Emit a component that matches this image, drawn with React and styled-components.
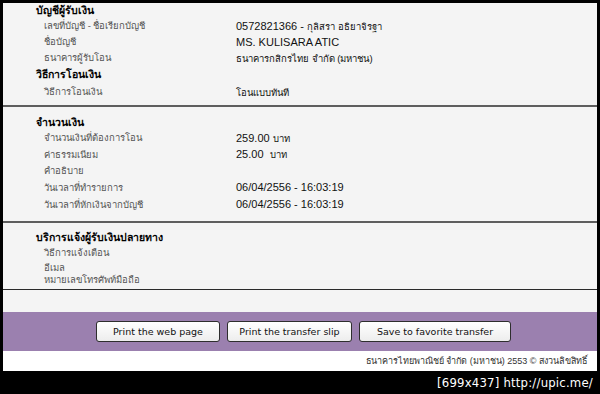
import React from 'react';
import styled, { createGlobalStyle } from 'styled-components';

const GlobalStyle = createGlobalStyle`
  html, body {
    margin: 0;
    padding: 0;
    background: #000;
  }
  body {
    font-family: Tahoma, "Liberation Sans", "Noto Sans", sans-serif;
  }
`;

const Frame = styled.div`
  width: 600px;
  height: 394px;
  background: #000;
  padding: 3px 3px 0 3px;
  box-sizing: border-box;
  display: flex;
  flex-direction: column;
`;

const Sheet = styled.div`
  background: #f4f4f4;
  display: flex;
  flex-direction: column;
`;

const Section = styled.div`
  padding-bottom: ${p => p.$pb}px;
  border-bottom: ${p => p.$line || '2px solid #5e5e5e'};
`;

const Heading = styled.div`
  font-size: 10.5px;
  font-weight: bold;
  color: #000;
  padding-left: 33px;
  height: ${p => p.$h || 16}px;
  line-height: ${p => p.$h || 16}px;
`;

const Row = styled.div`
  display: grid;
  grid-template-columns: 192px 1fr;
  padding-left: 41px;
  height: ${p => p.$h || 16}px;
  line-height: ${p => p.$h || 16}px;
  font-size: 11px;
`;

const Label = styled.span`
  color: #555;
  font-size: 9.5px;
`;

const Value = styled.span`
  color: #111;
  font-size: 11px;
`;

const Th = styled.span`
  font-size: 9.5px;
`;

const Spacer = styled.div`
  height: ${p => p.$h}px;
`;

const ActionBar = styled.div`
  background: #9b80af;
  height: 39px;
  display: flex;
  justify-content: center;
  align-items: center;
  gap: 7px;
  padding-left: 7px;
`;

const Button = styled.button`
  height: 21px;
  width: ${p => p.$w}px;
  padding: 0;
  border: 1px solid #2e2e2e;
  border-radius: 3px;
  background: linear-gradient(#ffffff, #ededed);
  font-family: "DejaVu Sans", Verdana, sans-serif;
  font-size: 9.5px;
  color: #111;
  cursor: pointer;
`;

const Footer = styled.div`
  background: #fff;
  height: 20px;
  display: flex;
  justify-content: flex-end;
  align-items: center;
  padding-right: 10px;
  font-size: 9px;
  color: #333;
`;

const Stamp = styled.div`
  flex: 1;
  display: flex;
  justify-content: flex-end;
  align-items: center;
  padding-right: 4px;
  color: #fff;
  font-family: "DejaVu Sans Condensed", "DejaVu Sans", sans-serif;
  font-size: 13px;
  letter-spacing: 0.2px;
`;

export default function App() {
  return (
    <>
      <GlobalStyle />
      <Frame>
        <Sheet>
          <Section $pb={4}>
            <Heading $h={15}>บัญชีผู้รับเงิน</Heading>
            <Row>
              <Label>เลขที่บัญชี - ชื่อเรียกบัญชี</Label>
              <Value>0572821366 - <Th>กุลิสรา อธิยาจิรฐา</Th></Value>
            </Row>
            <Row>
              <Label>ชื่อบัญชี</Label>
              <Value>MS. KULISARA ATIC</Value>
            </Row>
            <Row>
              <Label>ธนาคารผู้รับโอน</Label>
              <Value><Th>ธนาคารกสิกรไทย จำกัด (มหาชน)</Th></Value>
            </Row>
            <Heading $h={17}>วิธีการโอนเงิน</Heading>
            <Row $h={18}>
              <Label>วิธีการโอนเงิน</Label>
              <Value><Th>โอนแบบทันที</Th></Value>
            </Row>
          </Section>

          <Section $pb={8}>
            <Spacer $h={7} />
            <Heading>จำนวนเงิน</Heading>
            <Row $h={16}>
              <Label>จำนวนเงินที่ต้องการโอน</Label>
              <Value>259.00 <Th>บาท</Th></Value>
            </Row>
            <Row $h={17}>
              <Label>ค่าธรรมเนียม</Label>
              <Value>25.00&nbsp; <Th>บาท</Th></Value>
            </Row>
            <Row $h={16}>
              <Label>คำอธิบาย</Label>
              <Value />
            </Row>
            <Row $h={17}>
              <Label>วันเวลาที่ทำรายการ</Label>
              <Value>06/04/2556 - 16:03:19</Value>
            </Row>
            <Row $h={17}>
              <Label>วันเวลาที่หักเงินจากบัญชี</Label>
              <Value>06/04/2556 - 16:03:19</Value>
            </Row>
          </Section>

          <Section $pb={4} $line="1px solid #2a2a2a">
            <Spacer $h={6} />
            <Heading>บริการแจ้งผู้รับเงินปลายทาง</Heading>
            <Row>
              <Label>วิธีการแจ้งเตือน</Label>
              <Value />
            </Row>
            <Row $h={14}>
              <Label>อีเมล</Label>
              <Value />
            </Row>
            <Row $h={10}>
              <Label>หมายเลขโทรศัพท์มือถือ</Label>
              <Value />
            </Row>
          </Section>

          <Spacer $h={22} />

          <ActionBar>
            <Button $w={124}>Print the web page</Button>
            <Button $w={125}>Print the transfer slip</Button>
            <Button $w={152}>Save to favorite transfer</Button>
          </ActionBar>

          <Footer>ธนาคารไทยพาณิชย์ จำกัด (มหาชน) 2553 © สงวนลิขสิทธิ์</Footer>
        </Sheet>
        <Stamp>[699x437] http://upic.me/</Stamp>
      </Frame>
    </>
  );
}
